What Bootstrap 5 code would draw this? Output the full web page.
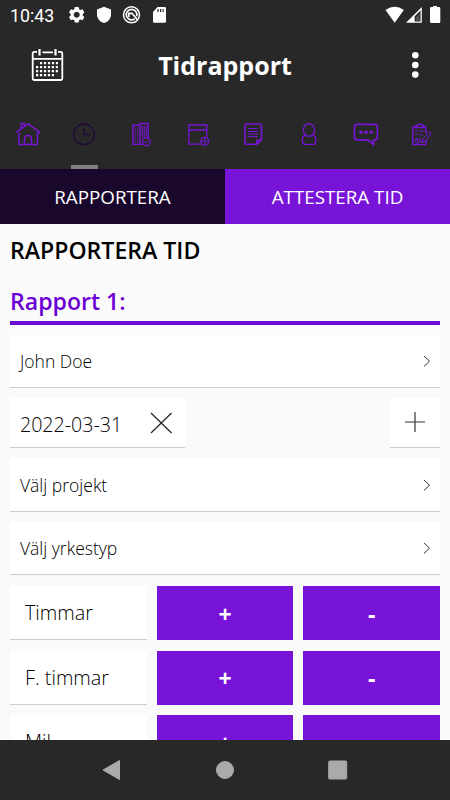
<!DOCTYPE html>
<html lang="sv">
<head>
<meta charset="utf-8">
<meta name="viewport" content="width=device-width, initial-scale=1">
<title>Tidrapport</title>
<link href="https://cdn.jsdelivr.net/npm/bootstrap@5.3.0/dist/css/bootstrap.min.css" rel="stylesheet">
<style>
:root{--violet:#7814d7;--ink:#282828}
body{font-family:"Open Sans","Noto Sans",sans-serif;background:#fafafa;height:800px;overflow:hidden;color:#000}
svg{display:block;flex:none}
.dark{background:var(--ink)}
.statusbar{height:30px;font:17.800px/30px Roboto,sans-serif;color:#fff;padding:0 8px 0 10px}
.clock{width:55px;padding-top:1px}
.appbar{height:70px;padding:0 20px 0 30px}
.appbar h1{font-size:25px;line-height:34px;font-weight:700;color:#fff;padding-right:15px}
.icontabs{height:69px}
.icontabs .nav-link{height:69px;padding:19px 0 0;border-radius:0}
.icontabs svg{fill:none;stroke:var(--violet);stroke-width:1.3}
.icontabs .active svg{stroke:#1f0838}
.icontabs .active::after{content:"";width:27px;height:4px;background:#808080;margin-top:auto}
.subtabs .btn{height:55px;border-radius:0;font-size:18.800px;border:0;color:#fff;padding:1px 0 0}
.on{background:#1a082c!important}
.violet{background:var(--violet)!important}
main{padding:0 10px;overflow:hidden;height:516px}
.h-page{font-size:23.1px;line-height:30px;font-weight:600;padding-top:11px}
.h-report{font-size:23.1px;line-height:30px;font-weight:600;color:#6c00d4;margin-top:21px;padding-bottom:5px;border-bottom:4px solid #6e0bd2}
.field{background:#fff;border-bottom:1px solid #cdcdcd;font-weight:300;font-size:17.5px}
.picker{height:53.5px;padding:1px 8px 0 10px}
.small-field{height:50px;font-size:19.6px}
.date-field{width:175px;padding:0 12px 0 10px}
.add-field{width:50px;padding-bottom:1px}
.stack{display:grid;gap:10px;margin-top:9.500px}
.hours{display:grid;grid-template-columns:repeat(3,1fr);gap:10.5px 10px;margin-top:11px}
.hours>*{height:54px}
.hours .field{font-size:19.8px;padding:1px 0 0 15px}
.hours .btn{border-radius:0;border:0;color:#fff;font-weight:700;font-size:23px;line-height:1;padding:2px 0 0}
.navkeys{height:60px}
</style>
</head>
<body class="d-flex flex-column">
<header class="dark">
  <div class="statusbar d-flex align-items-center">
    <span class="clock">10:43</span>
    <svg width="104" height="30" viewBox="65 0 104 30" class="me-auto" fill="#fff">
      <path fill-rule="evenodd" d="M74.8 7h3.8l.5 2.2 1.3.8 2.1-.8 1.9 3.2-1.7 1.5v1.7l1.7 1.5-1.9 3.2-2.1-.8-1.3.8-.5 2.3h-3.8l-.5-2.3-1.3-.8-2.1.8-1.9-3.2 1.7-1.5v-1.7L69 12.400l1.900-3.200 2.100.8 1.300-.8zM76.700 11.800a3 3 0 1 0 .01 0z"/>
      <path d="M104 6.800l7 2.600v5c0 4.200-3 7.500-7 8.600-4-1.100-7-4.400-7-8.600v-5z"/>
      <g fill="none" stroke="#fff"><circle cx="131.500" cy="14.800" r="8" stroke-width="1.500"/><path d="M134.800 18.800a5.300 5.300 0 1 1 1.800-2.500" stroke-width="1.700"/><path d="M128.800 17v-3.700h3.200l5.500 6.500" stroke-width="1.700"/></g>
      <path fill-rule="evenodd" d="M157.500 7h7.200q1.300 0 1.300 1.300v13.200q0 1.300-1.300 1.300h-10.400q-1.300 0-1.300-1.300V12zM157.500 9v3h1.200V9zM160 9v3h1.200V9zM162.500 9v3h1.200V9z"/>
    </svg>
    <svg width="58" height="30" viewBox="384 0 58 30" fill="#fff">
      <path d="M385.500 10q9.200-6.600 18.300 0L394.700 22.800z"/>
      <path fill-rule="evenodd" d="M421.800 7v15.800H406zM420.500 10.500l-5.800 5.800v5.200h5.800z"/><path d="M419.500 14v6.800h-3.500v-3.500z" fill="#555"/>
      <path d="M433 7v-1h4v1h2q1.300 0 1.300 1.300v13.400q0 1.300-1.300 1.300h-7.700q-1.300 0-1.300-1.300V8.300q0-1.300 1.300-1.300z"/>
    </svg>
  </div>
  <div class="appbar d-flex align-items-center justify-content-between">
    <svg width="35" height="36" viewBox="30 47 35 36" fill="none" stroke="#fff" stroke-width="1.800">
      <path d="M37 51.800h-2.500q-1.800 0-1.800 1.800v24.600q0 1.800 1.800 1.800h26q1.800 0 1.800-1.800V53.600q0-1.800-1.800-1.800H58M42.500 52.300h10.500M33 58.800h29"/>
      <path d="M39.500 49v6.500M55.500 49v6.500" stroke-width="2.200"/>
      <path stroke-width="2.200" stroke-dasharray="2.200 1.750" d="M40 63.100h19.500M36 67.100h23.500M36 71.100h23.500M36 75.100h19"/>
    </svg>
    <h1 class="mb-0">Tidrapport</h1>
    <svg width="30" height="36" viewBox="400 47 30 36" fill="#fff"><circle cx="415.300" cy="55.300" r="3.300"/><circle cx="415.300" cy="65" r="3.300"/><circle cx="415.300" cy="74.600" r="3.300"/></svg>
  </div>
  <nav class="nav nav-fill icontabs flex-nowrap">
    <a class="nav-link w-100 d-flex flex-column align-items-center" href="#" aria-label="Hem"><svg width="30" height="30" viewBox="13.100 119 30 30"><path stroke-width="1.500" d="M19 133v11.500h18.500V133M17.300 133V131.600L28.200 124l11 7.600V133H37M21.300 128.500v-5h3v3M24.500 144.500V139q0-3.500 3.500-3.500t3.500 3.500v5.500"/></svg></a>
    <a class="nav-link active w-100 d-flex flex-column align-items-center" href="#" aria-label="Tid"><svg width="30" height="30" viewBox="69.400 119 30 30"><circle cx="84.400" cy="134.300" r="10.300"/><path d="M84.400 128v6.500h6.300"/></svg></a>
    <a class="nav-link w-100 d-flex flex-column align-items-center" href="#" aria-label="Byggen"><svg width="30" height="30" viewBox="125.600 119 30 30"><path stroke-width="1.400" d="M142 144.400h-9.500V125.200h7M139.500 144.400V123.500h8.300V138"/><path stroke-width="1.100" stroke-dasharray="1.300 1" d="M134.800 127.500v15M137.200 127.500v15"/><path stroke-width="1.100" d="M141.900 126v12M143.800 126v11M145.700 126v11" stroke-dasharray="3.500 .5"/><circle cx="146" cy="141.800" r="3.900" fill="#282828"/><path d="M144 141.800l1.800 1 2-2.300" stroke-width="1"/></svg></a>
    <a class="nav-link w-100 d-flex flex-column align-items-center" href="#" aria-label="Kalender"><svg width="30" height="30" viewBox="181.900 119 30 30"><path d="M201 144.200h-12.300V125h18v12.500M188.700 130h18"/><circle cx="204.600" cy="141.300" r="3.900"/><path d="M204.600 138.500v5.600M201.800 141.300h5.600" stroke-width="1"/></svg></a>
    <a class="nav-link w-100 d-flex flex-column align-items-center" href="#" aria-label="Dokument"><svg width="30" height="30" viewBox="238.100 119 30 30"><path stroke-width="1.600" d="M257 144.300h-10.500q-1.500 0-1.500-1.500V125.500q0-1.500 1.500-1.500h13.500q1.500 0 1.500 1.500V140zv-4h4"/><path stroke-width="1" d="M248 128.500h10M248 131.500h10M248 134h10M248 136.500h10"/></svg></a>
    <a class="nav-link w-100 d-flex flex-column align-items-center" href="#" aria-label="Profil"><svg width="30" height="30" viewBox="294.400 119 30 30"><ellipse cx="309.400" cy="130" rx="5.600" ry="6.300"/><path d="M305.700 134.800q-3 2-3 5v2q0 2.500 2.500 2.500h8.500q2.500 0 2.500-2.500v-2q0-3-3-5"/></svg></a>
    <a class="nav-link w-100 d-flex flex-column align-items-center" href="#" aria-label="Chatt"><svg width="30" height="30" viewBox="350.600 119 30 30"><path stroke-width="1.700" d="M357 124.400h17q3 0 3 3v9.500q0 3-3 3h-1v4.500l-5.500-4.500H357q-3 0-3-3v-9.500q0-3 3-3z"/><g fill="#7814d7" stroke="none"><circle cx="360.500" cy="132.300" r="1.800"/><circle cx="365.700" cy="132.300" r="1.800"/><circle cx="370.900" cy="132.300" r="1.800"/></g></svg></a>
    <a class="nav-link w-100 d-flex flex-column align-items-center" href="#" aria-label="Checklista"><svg width="30" height="30" viewBox="406.900 119 30 30"><path stroke-width="1.400" d="M415.500 127h-2.800v17.600h13V140M422 127h3.600v6M415.800 127.500v-2l2-.5q1.200-2 3-.5l2.500.7v2.300z"/><path stroke-width="1" d="M415 130.500l1 1 1.500-2M419 131h4.500M415 134l1 1 1.500-2M419 135h3.500M415 142.500q1-5 2-4.500t0 4.500 2-.5 1-3 .5 3 2-1M421.500 142.500l1.200-3 6.100-8 2.300 1.800-6.200 8z"/></svg></a>
  </nav>
</header>
<div class="subtabs d-flex">
  <button class="btn on w-50">RAPPORTERA</button>
  <button class="btn violet w-50">ATTESTERA TID</button>
</div>
<main>
  <h2 class="h-page m-0">RAPPORTERA TID</h2>
  <h3 class="h-report mb-0">Rapport 1:</h3>
  <div class="stack">
    <div class="field picker d-flex align-items-center justify-content-between"><span>John Doe</span><svg width="10" height="14" fill="none" stroke="#333"><path d="M2 2l5.500 5.200L2 12.400"/></svg></div>
    <div class="d-flex justify-content-between">
      <div class="field small-field date-field d-flex align-items-center justify-content-between"><span class="pt-1">2022-03-31</span><svg width="24" height="24" stroke="#222" stroke-width="1.200"><path d="M2 2L22.500 22M22.500 2L2 22"/></svg></div>
      <div class="field small-field add-field d-flex align-items-center justify-content-center"><svg width="22" height="22" stroke="#333" stroke-width="1.200"><path d="M1 11h20M11 1v20"/></svg></div>
    </div>
    <div class="field picker d-flex align-items-center justify-content-between"><span>Välj projekt</span><svg width="10" height="14" fill="none" stroke="#333"><path d="M2 2l5.500 5.200L2 12.400"/></svg></div>
    <div class="field picker d-flex align-items-center justify-content-between"><span>Välj yrkestyp</span><svg width="10" height="14" fill="none" stroke="#333"><path d="M2 2l5.500 5.200L2 12.400"/></svg></div>
  </div>
  <div class="hours">
    <div class="field d-flex align-items-center">Timmar</div><button class="btn violet">+</button><button class="btn violet">-</button>
    <div class="field d-flex align-items-center">F. timmar</div><button class="btn violet">+</button><button class="btn violet">-</button>
    <div class="field d-flex align-items-center">Mil</div><button class="btn violet">+</button><button class="btn violet">-</button>
  </div>
</main>
<footer class="dark navkeys d-flex align-items-center justify-content-center">
  <svg width="250" height="30" viewBox="100 755 250 30" fill="#aaa" stroke="#aaa" stroke-linejoin="round"><path d="M103 770l16.500-9.500v19z"/><circle cx="225" cy="770" r="8.500"/><rect x="328.700" y="761" width="18" height="18" rx="1"/></svg>
</footer>
<script src="https://cdn.jsdelivr.net/npm/bootstrap@5.3.0/dist/js/bootstrap.bundle.min.js"></script>
</body>
</html>
